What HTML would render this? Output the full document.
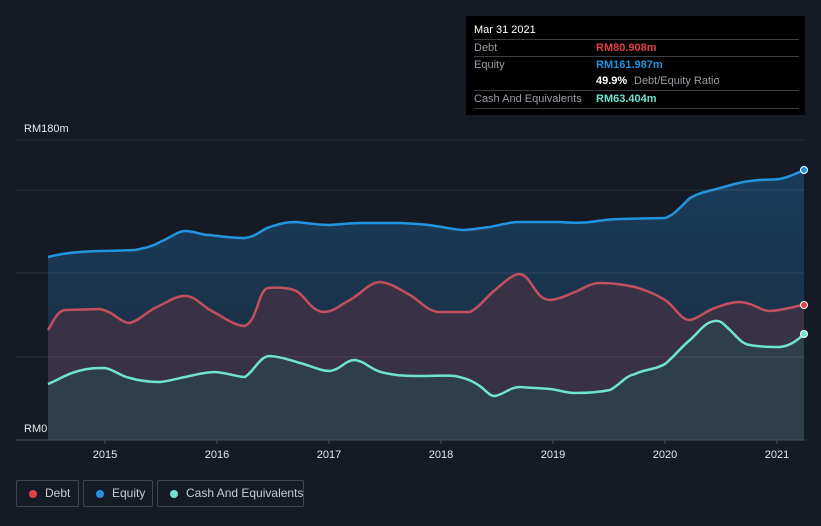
<!DOCTYPE html>
<html><head><meta charset="utf-8"><style>
body{margin:0;background:#151b25;font-family:"Liberation Sans",sans-serif;width:821px;height:526px;overflow:hidden;position:relative}
.tt{position:absolute;left:466px;top:16px;width:339px;height:99px;background:#000;}
.row{position:absolute;left:8px;right:6px;font-size:11px;color:#9a9ea5;border-top:1px solid #3a3d42;height:17px;line-height:17px;white-space:nowrap}
.v{position:absolute;left:122px;font-weight:bold}
.leg{position:absolute;top:480px;height:27px;border:1px solid #3d4350;border-radius:2px;color:#c8ccd2;font-size:12px;line-height:25px;box-sizing:border-box;white-space:nowrap}
.dot{position:absolute;left:12px;top:9px;width:8px;height:8px;border-radius:50%}
</style></head><body>
<svg width="821" height="526" style="position:absolute;left:0;top:0">
<defs>
<linearGradient id="ge" x1="0" y1="0" x2="0" y2="1"><stop offset="0" stop-color="#1a3d5c"/><stop offset="1" stop-color="#1b2a3a"/></linearGradient>
</defs>
<line x1="16" y1="140" x2="805" y2="140" stroke="#2c323c"/>
<path d="M48,257 C60,254 70,252 100,251 C120,251 130,250 135,250 C150,247 155,245 160,242 C172,237 178,231 185,231 C195,231 200,235 210,235 C225,237 235,238 245,238 C258,236 262,229 270,227 C282,223 288,222 295,222 C310,223 315,225 330,225 C345,224 350,223 360,223 L400,223 C418,224 425,224 435,226 C450,228 455,230 465,230 C478,229 480,228 490,227 C505,224 510,222 520,222 L560,222 C575,223 580,223 590,222 C605,220 610,219 620,219 L665,218 C675,215 682,205 690,198 C700,192 710,191 720,188 C735,184 740,182 750,181 C765,179 770,180 780,179 C790,177 797,173 804,170 L804,440 L48,440Z" fill="url(#ge)"/>
<path d="M48,330 C55,318 58,311 65,310 L100,309 C115,312 120,323 130,323 C140,320 145,313 155,308 C168,302 175,296 185,296 C195,296 200,304 210,310 C225,318 235,326 245,326 C258,320 258,290 268,288 C280,287 292,288 298,292 C308,300 312,312 325,312 C335,311 340,305 350,300 C362,293 370,282 380,282 C392,283 400,290 410,295 C420,301 428,312 440,312 L470,312 C480,307 485,298 495,290 C505,282 512,274 520,274 C532,276 535,300 550,300 C560,299 565,296 575,292 C585,288 590,283 600,283 C615,283 625,285 635,287 C648,291 655,294 665,300 C675,306 680,320 690,320 C700,318 705,311 715,308 C725,304 732,302 740,302 C755,303 760,311 770,311 C785,310 795,306 804,305 L804,440 L48,440Z" fill="#3c3244" opacity="0.92"/>
<path d="M48,384 C60,379 65,375 75,372 C88,368 95,368 105,368 C115,370 120,376 130,378 C140,381 150,382 160,382 C170,381 175,379 185,377 C195,375 205,372 215,372 C228,373 238,377 245,377 C255,370 260,356 270,356 C282,357 290,360 300,363 C312,366 320,371 330,371 C342,369 345,360 355,360 C365,361 372,371 385,373 C398,376 410,376 420,376 C435,376 445,375 455,376 C465,378 470,380 475,383 C485,388 488,396 495,396 C505,394 510,387 520,387 C530,388 540,388 550,389 C560,390 565,393 575,393 C590,393 600,392 610,390 C620,385 625,376 635,374 C645,369 655,370 665,364 C675,356 680,348 690,340 C700,331 705,322 715,321 C722,320 725,326 730,330 C737,337 742,344 750,345 C760,347 770,347 780,347 C790,346 798,340 804,334 L804,440 L48,440Z" fill="#2e4048" opacity="0.95"/>
<g stroke="#ffffff" stroke-opacity="0.09"><line x1="16" y1="190" x2="805" y2="190"/><line x1="16" y1="273" x2="805" y2="273"/><line x1="16" y1="357" x2="805" y2="357"/></g>
<path d="M48,257 C60,254 70,252 100,251 C120,251 130,250 135,250 C150,247 155,245 160,242 C172,237 178,231 185,231 C195,231 200,235 210,235 C225,237 235,238 245,238 C258,236 262,229 270,227 C282,223 288,222 295,222 C310,223 315,225 330,225 C345,224 350,223 360,223 L400,223 C418,224 425,224 435,226 C450,228 455,230 465,230 C478,229 480,228 490,227 C505,224 510,222 520,222 L560,222 C575,223 580,223 590,222 C605,220 610,219 620,219 L665,218 C675,215 682,205 690,198 C700,192 710,191 720,188 C735,184 740,182 750,181 C765,179 770,180 780,179 C790,177 797,173 804,170" fill="none" stroke="#2394df" stroke-width="2.5"/>
<path d="M48,330 C55,318 58,311 65,310 L100,309 C115,312 120,323 130,323 C140,320 145,313 155,308 C168,302 175,296 185,296 C195,296 200,304 210,310 C225,318 235,326 245,326 C258,320 258,290 268,288 C280,287 292,288 298,292 C308,300 312,312 325,312 C335,311 340,305 350,300 C362,293 370,282 380,282 C392,283 400,290 410,295 C420,301 428,312 440,312 L470,312 C480,307 485,298 495,290 C505,282 512,274 520,274 C532,276 535,300 550,300 C560,299 565,296 575,292 C585,288 590,283 600,283 C615,283 625,285 635,287 C648,291 655,294 665,300 C675,306 680,320 690,320 C700,318 705,311 715,308 C725,304 732,302 740,302 C755,303 760,311 770,311 C785,310 795,306 804,305" fill="none" stroke="#c4505f" stroke-width="2.5"/>
<path d="M48,384 C60,379 65,375 75,372 C88,368 95,368 105,368 C115,370 120,376 130,378 C140,381 150,382 160,382 C170,381 175,379 185,377 C195,375 205,372 215,372 C228,373 238,377 245,377 C255,370 260,356 270,356 C282,357 290,360 300,363 C312,366 320,371 330,371 C342,369 345,360 355,360 C365,361 372,371 385,373 C398,376 410,376 420,376 C435,376 445,375 455,376 C465,378 470,380 475,383 C485,388 488,396 495,396 C505,394 510,387 520,387 C530,388 540,388 550,389 C560,390 565,393 575,393 C590,393 600,392 610,390 C620,385 625,376 635,374 C645,369 655,370 665,364 C675,356 680,348 690,340 C700,331 705,322 715,321 C722,320 725,326 730,330 C737,337 742,344 750,345 C760,347 770,347 780,347 C790,346 798,340 804,334" fill="none" stroke="#6fe3d0" stroke-width="2.5"/>
<circle cx="804" cy="170" r="3.5" fill="#2394df" stroke="#fff" stroke-width="1"/>
<circle cx="804" cy="305" r="3.5" fill="#e0404a" stroke="#fff" stroke-width="1"/>
<circle cx="804" cy="334" r="3.5" fill="#6fe3d0" stroke="#fff" stroke-width="1"/>
<line x1="16" y1="440" x2="805" y2="440" stroke="#4a505a"/>
<g stroke="#4a505a"><line x1="105" y1="440" x2="105" y2="444"/><line x1="217" y1="440" x2="217" y2="444"/><line x1="329" y1="440" x2="329" y2="444"/><line x1="441" y1="440" x2="441" y2="444"/><line x1="553" y1="440" x2="553" y2="444"/><line x1="665" y1="440" x2="665" y2="444"/><line x1="777" y1="440" x2="777" y2="444"/></g>
<rect x="16" y="422" width="32" height="17" fill="#151b25"/>
<g fill="#e6e8eb" font-size="11" font-family="Liberation Sans,sans-serif" text-anchor="middle"><text x="105" y="458">2015</text><text x="217" y="458">2016</text><text x="329" y="458">2017</text><text x="441" y="458">2018</text><text x="553" y="458">2019</text><text x="665" y="458">2020</text><text x="777" y="458">2021</text></g>
<text x="24" y="132" fill="#e6e8eb" font-size="11" font-family="Liberation Sans,sans-serif">RM180m</text>
<text x="24" y="432" fill="#e6e8eb" font-size="11" font-family="Liberation Sans,sans-serif">RM0</text>
</svg>
<div class="tt">
<div style="position:absolute;left:8px;top:8px;color:#fff;font-size:11px">Mar 31 2021</div>
<div class="row" style="top:23px">Debt<span class="v" style="color:#e0404a">RM80.908m</span></div>
<div class="row" style="top:40px">Equity<span class="v" style="color:#2394df">RM161.987m</span></div>
<div class="row" style="top:57px;border-top:none"><span class="v" style="color:#fff">49.9%</span><span style="position:absolute;left:160px">Debt/Equity Ratio</span></div>
<div class="row" style="top:74px">Cash And Equivalents<span class="v" style="color:#6fe3d0">RM63.404m</span></div>
<div style="position:absolute;left:8px;right:6px;top:92px;border-top:1px solid #3a3d42"></div>
</div>
<div class="leg" style="left:16px;width:63px"><span class="dot" style="background:#e0404a"></span><span style="position:absolute;left:28px">Debt</span></div>
<div class="leg" style="left:83px;width:70px"><span class="dot" style="background:#2394df"></span><span style="position:absolute;left:28px">Equity</span></div>
<div class="leg" style="left:157px;width:147px"><span class="dot" style="background:#6fe3d0"></span><span style="position:absolute;left:28px">Cash And Equivalents</span></div>
</body></html>
